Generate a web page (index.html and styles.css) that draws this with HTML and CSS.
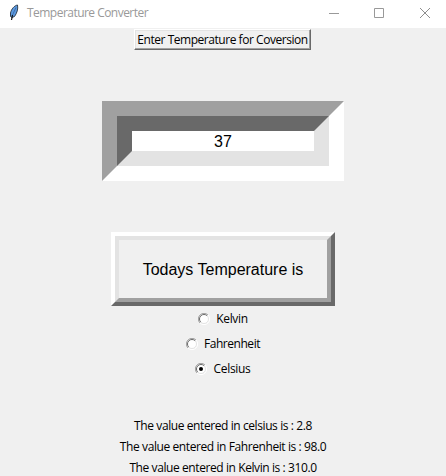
FILE: index.html
```html
<!DOCTYPE html>
<html lang="en">
<head>
<meta charset="utf-8">
<title>Temperature Converter</title>
<link rel="stylesheet" href="styles.css">
</head>
<body>
<header class="titlebar">
  <svg class="feather" width="10" height="17" viewBox="0 0 10 17">
    <path d="M8.500 1C5.500 1.500 2.300 5 1.500 9L1.500 12.500L3 13.500L5.500 12.500C8 9 9.300 5 8.500 1Z" fill="#5c9ae0" stroke="#26323f" stroke-width=".9"/>
    <path d="M3.500 11L2.500 16" fill="none" stroke="#111" stroke-width="1.200"/>
    <path d="M7 3.500L3.500 11" stroke="#2c4f80" stroke-width=".6"/>
  </svg>
  <span class="title">Temperature Converter</span>
  <div class="controls">
    <svg width="10" height="10" viewBox="0 0 10 10"><path d="M0 5.500H10" stroke="#999"/></svg>
    <svg width="10" height="10" viewBox="0 0 10 10"><path d="M.5.5H9.500V9.500H.5Z" fill="none" stroke="#999"/></svg>
    <svg class="close" width="10" height="10" viewBox="0 0 10 10"><path d="M0 0L10 10M10 0L0 10" stroke="#8e8e8e"/></svg>
  </div>
</header>
<main class="window">
  <button class="enter">Enter Temperature for Coversion</button>
  <div class="entry">37</div>
  <button class="today">Todays Temperature is</button>
  <div class="options">
    <label class="option"><svg class="radio" width="12" height="12" viewBox="0 0 12 12"><circle cx="6" cy="6" r="5" fill="#fff"/><path d="M2 10A5.500 5.500 0 0 1 10 2" fill="none" stroke="#a0a0a0"/><path d="M2.800 9.200A4.500 4.500 0 0 1 9.200 2.800" fill="none" stroke="#696969"/><path d="M10 2A5.500 5.500 0 0 1 2 10" fill="none" stroke="#fff"/><path d="M9.200 2.800A4.500 4.500 0 0 1 2.800 9.200" fill="none" stroke="#e3e3e3"/></svg><span>Kelvin</span></label>
    <label class="option"><svg class="radio" width="12" height="12" viewBox="0 0 12 12"><circle cx="6" cy="6" r="5" fill="#fff"/><path d="M2 10A5.500 5.500 0 0 1 10 2" fill="none" stroke="#a0a0a0"/><path d="M2.800 9.200A4.500 4.500 0 0 1 9.200 2.800" fill="none" stroke="#696969"/><path d="M10 2A5.500 5.500 0 0 1 2 10" fill="none" stroke="#fff"/><path d="M9.200 2.800A4.500 4.500 0 0 1 2.800 9.200" fill="none" stroke="#e3e3e3"/></svg><span class="fahrenheit">Fahrenheit</span></label>
    <label class="option"><svg class="radio" width="12" height="12" viewBox="0 0 12 12"><circle cx="6" cy="6" r="5" fill="#fff"/><path d="M2 10A5.500 5.500 0 0 1 10 2" fill="none" stroke="#a0a0a0"/><path d="M2.800 9.200A4.500 4.500 0 0 1 9.200 2.800" fill="none" stroke="#696969"/><path d="M10 2A5.500 5.500 0 0 1 2 10" fill="none" stroke="#fff"/><path d="M9.200 2.800A4.500 4.500 0 0 1 2.800 9.200" fill="none" stroke="#e3e3e3"/><circle cx="6" cy="6" r="2" fill="#000"/></svg><span>Celsius</span></label>
  </div>
  <div class="results">
    <p>The value entered in celsius is : 2.8</p>
    <p>The value entered in Fahrenheit is : 98.0</p>
    <p>The value entered in Kelvin is : 310.0</p>
  </div>
</main>
</body>
</html>
```

FILE: styles.css
```css
* { box-sizing: border-box; }
html, body { margin: 0; height: 476px; overflow: hidden; }
body {
  background: #f0f0f0;
  color: #000;
  font: 12px/21px "Open Sans", "Noto Sans", sans-serif;
  letter-spacing: -0.3px;
  white-space: nowrap;
}
.titlebar {
  height: 28px;
  padding: 0 16px 3px 9px;
  background: #fff;
  color: #999;
  display: flex;
  align-items: center;
}
.title { margin-left: 8px; letter-spacing: -0.53px; }
.controls { margin-left: auto; display: flex; gap: 35px; }
.controls .close { margin-left: 1px; }
.controls svg, .feather, .radio { display: block; flex: none; }
.window {
  display: flex;
  flex-direction: column;
  align-items: center;
  padding-top: 1px;
}
button {
  font: inherit;
  color: inherit;
  padding: 0;
  background: #f0f0f0;
}
.enter {
  width: 177px;
  height: 21px;
  padding-top: 1px;
  line-height: 18px;
  letter-spacing: -0.46px;
  border: 1px solid;
  border-color: #fff #696969 #696969 #fff;
  box-shadow: inset -1px -1px #a0a0a0, inset 1px 1px #e3e3e3;
  margin-right: 1px;
}
.entry {
  width: 242px;
  height: 80px;
  margin-top: 51px;
  padding-top: 16px;
  border: 15px solid;
  border-color: #a0a0a0 #fff #fff #a0a0a0;
  background: #fff;
  position: relative;
  font: 16px/20px "Liberation Sans", Arial, sans-serif;
  letter-spacing: 0;
  text-align: center;
}
.entry::before {
  content: "";
  position: absolute;
  inset: 0;
  border: 15px solid;
  border-color: #696969 #e3e3e3 #e3e3e3 #696969;
}
.today {
  width: 224px;
  height: 74px;
  margin-top: 51px;
  padding-top: 2px;
  border: 4px solid;
  border-color: #fff #696969 #696969 #fff;
  position: relative;
  font: 16px/20px "Liberation Sans", Arial, sans-serif;
  letter-spacing: 0;
}
.today::before {
  content: "";
  position: absolute;
  inset: 0;
  border: 4px solid;
  border-color: #e3e3e3 #a0a0a0 #a0a0a0 #e3e3e3;
}
.options { display: flex; flex-direction: column; align-items: center; }
.option { height: 25px; display: flex; align-items: center; gap: 6px; }
.fahrenheit { letter-spacing: -0.45px; }
.results { margin-top: 34px; text-align: center; letter-spacing: -0.41px; }
.results p { margin: 0; height: 21px; }
```
